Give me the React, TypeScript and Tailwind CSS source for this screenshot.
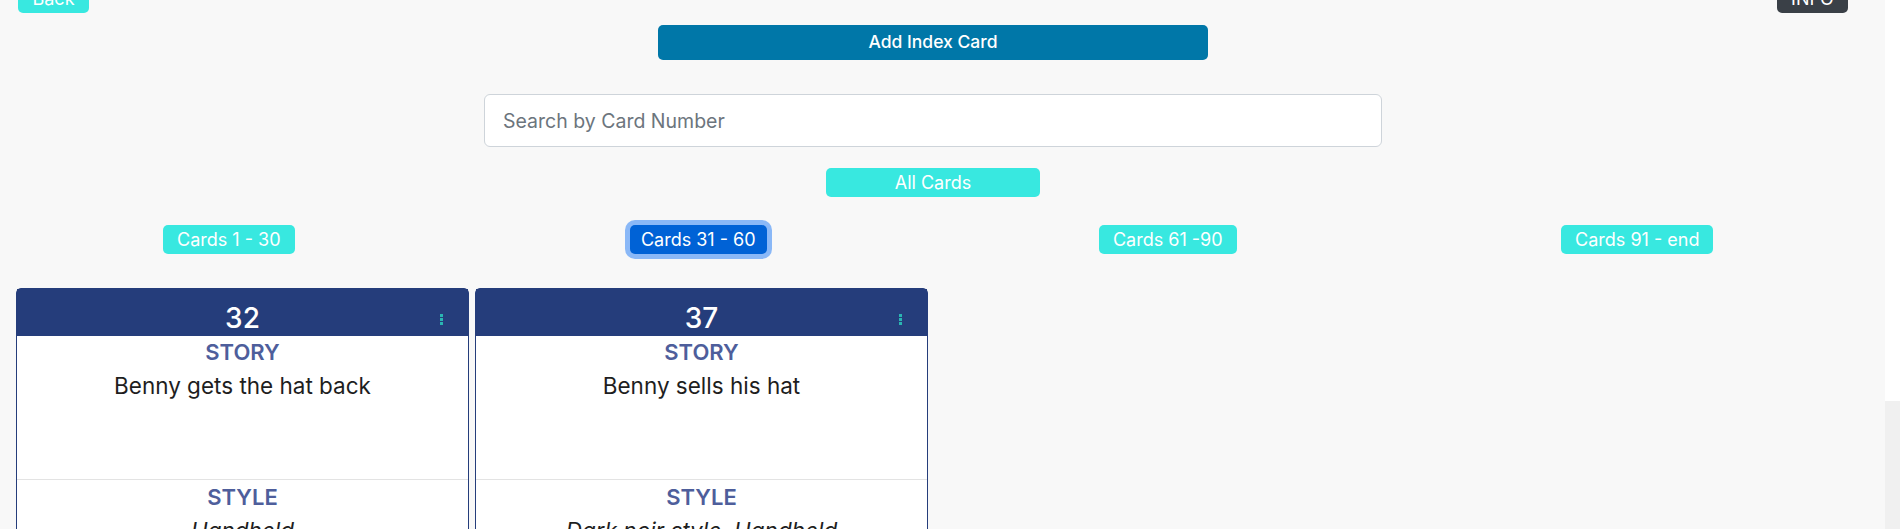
import React from "react";

const ranges = [
  { label: "Cards 1 - 30", active: false },
  { label: "Cards 31 - 60", active: true },
  { label: "Cards 61 -90", active: false },
  { label: "Cards 91 - end", active: false },
];

const cards = [
  { num: "32", story: "Benny gets the hat back", style: "Handheld" },
  { num: "37", story: "Benny sells his hat", style: "Dark noir style, Handheld" },
];

function Kebab() {
  return (
    <div className="absolute right-[25px] top-[25px] flex flex-col gap-[1px]">
      <span className="block h-[3px] w-[3px] bg-[#2ab5b2]" />
      <span className="block h-[3px] w-[3px] bg-[#2ab5b2]" />
      <span className="block h-[3px] w-[3px] bg-[#2ab5b2]" />
    </div>
  );
}

function Card({ num, story, style }: { num: string; story: string; style: string }) {
  return (
    <div className="w-[453px] shrink-0 rounded-t-[5px] border border-[#253d7b] bg-white">
      <div className="relative h-[47px] bg-[#253d7b] pt-[12px] text-center text-[28px] leading-[34px] font-medium text-white">
        {num}
        <Kebab />
      </div>
      <div className="h-[144px] border-b border-[#e3e3e3] pt-[3px] text-center">
        <div className="text-[22px] leading-[26px] font-semibold text-[#4e5e9b]">STORY</div>
        <div className="mt-[8px] text-[22.5px] leading-[26px] text-[#1e1e1e]">{story}</div>
      </div>
      <div className="h-[141px] pt-[4px] text-center">
        <div className="text-[22px] leading-[26px] font-semibold text-[#4e5e9b]">STYLE</div>
        <div className="mt-[8px] text-[22.5px] leading-[26px] italic text-[#1e1e1e]">{style}</div>
      </div>
    </div>
  );
}

export default function App() {
  return (
    <div className="flex h-[529px] w-[1900px] overflow-hidden font-['Inter',sans-serif]">
      <div className="w-[1885px] shrink-0 bg-[#f8f8f8]">
        <div className="mt-[-16px] flex justify-between pl-[18px] pr-[37px]">
          <button className="h-[29px] w-[71px] rounded-[5px] bg-[#38e8e0] text-[18px] text-white">Back</button>
          <button className="h-[29px] w-[71px] rounded-[5px] bg-[#3a4047] text-[18px] text-white">INFO</button>
        </div>
        <div className="ml-[-6px] flex w-[1878px] flex-col items-center">
          <button className="mt-[12px] h-[35px] w-[550px] rounded-[5px] bg-[#0077a8] text-[17.5px] font-medium text-white">
            Add Index Card
          </button>
          <input
            className="mt-[34px] h-[53px] w-[898px] rounded-[6px] border border-[#ced4da] bg-white px-[18px] text-[19.5px] text-[#212529] outline-none placeholder:text-[#6c757d]"
            placeholder="Search by Card Number"
          />
          <button className="mt-[21px] h-[29px] w-[214px] rounded-[5px] bg-[#38e8e0] text-[18px] text-white">
            All Cards
          </button>
        </div>
        <div className="ml-[-6px] mt-[28px] grid w-[1878px] grid-cols-4 justify-items-center">
          {ranges.map((r) =>
            r.active ? (
              <button
                key={r.label}
                className="h-[29px] rounded-[5px] bg-[#0062d6] px-[11px] text-[18px] text-white ring-[5px] ring-[#8ab8f7]"
              >
                {r.label}
              </button>
            ) : (
              <button key={r.label} className="h-[29px] rounded-[5px] bg-[#38e8e0] px-[14px] text-[18px] text-white">
                {r.label}
              </button>
            )
          )}
        </div>
        <div className="mt-[34px] flex gap-[6px] pl-[16px]">
          {cards.map((c) => (
            <Card key={c.num} {...c} />
          ))}
        </div>
      </div>
      <div className="flex w-[15px] flex-col">
        <div className="h-[401px] bg-white" />
        <div className="flex-1 bg-[#f0f0f0]" />
      </div>
    </div>
  );
}
